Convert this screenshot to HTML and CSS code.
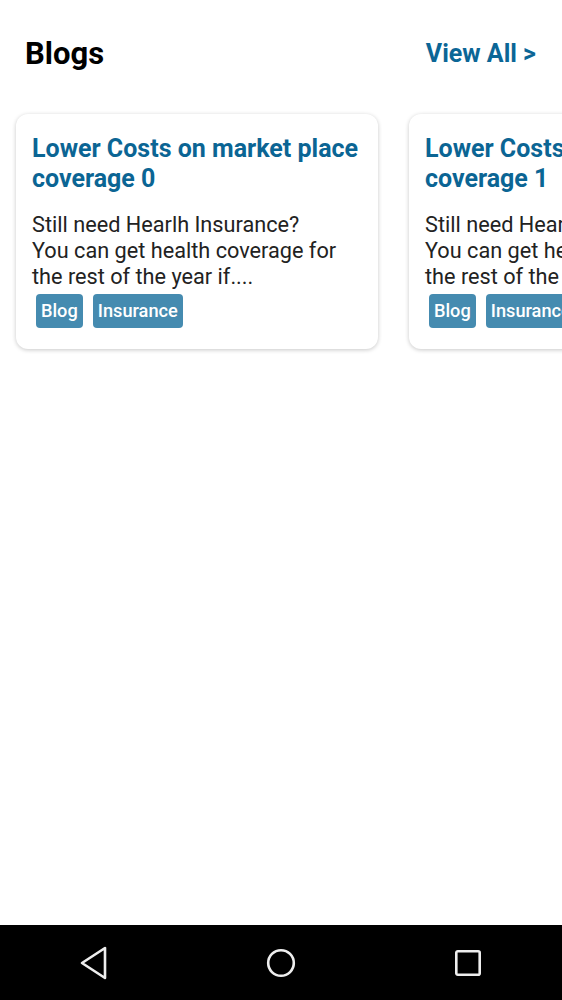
FILE: index.html
```html
<!DOCTYPE html>
<html>
<head>
<meta charset="utf-8">
<link rel="stylesheet" href="styles.css">
</head>
<body>
<div class="screen">
  <main class="content">
    <header class="section-head">
      <h1 class="section-title">Blogs</h1>
      <a class="view-all">View All &gt;</a>
    </header>
    <div class="carousel">
      <article class="card">
        <h2 class="card-title">Lower Costs on market place coverage 0</h2>
        <p class="card-text">Still need Hearlh Insurance?<br>You can get health coverage for the rest of the year if....</p>
        <div class="tags"><span class="tag">Blog</span><span class="tag">Insurance</span></div>
      </article>
      <article class="card">
        <h2 class="card-title">Lower Costs on market place coverage 1</h2>
        <p class="card-text">Still need Hearlh Insurance?<br>You can get health coverage for the rest of the year if....</p>
        <div class="tags"><span class="tag">Blog</span><span class="tag">Insurance</span></div>
      </article>
    </div>
  </main>
  <nav class="navbar">
    <svg class="nav-icon" width="30" height="34" viewBox="0 0 30 34"><path d="M26 2 L26 32 L3 17 Z" fill="none" stroke="#eeeeee" stroke-width="2.6" stroke-linejoin="round"/></svg>
    <svg class="nav-icon" width="32" height="32" viewBox="0 0 32 32"><circle cx="16" cy="16" r="12.8" fill="none" stroke="#eeeeee" stroke-width="2.6"/></svg>
    <svg class="nav-icon" width="30" height="30" viewBox="0 0 30 30"><rect x="3.3" y="3.3" width="23.4" height="23.4" rx="1.5" fill="none" stroke="#eeeeee" stroke-width="2.6"/></svg>
  </nav>
</div>
</body>
</html>
```
FILE: styles.css
```css
html, body {
  margin: 0;
  padding: 0;
  background: #ffffff;
}
body {
  font-family: Roboto, "Liberation Sans", sans-serif;
}
.screen {
  width: 562px;
  height: 1000px;
  display: flex;
  flex-direction: column;
  overflow: hidden;
}
.content {
  flex: 1;
  display: flex;
  flex-direction: column;
}
.section-head {
  display: flex;
  justify-content: space-between;
  align-items: center;
  padding: 37px 26px 0 25px;
  height: 34px;
}
.section-title {
  margin: 0;
  font-size: 31px;
  font-weight: 700;
  color: #000000;
  line-height: 34px;
}
.view-all {
  font-size: 25px;
  font-weight: 700;
  color: #0b6696;
  line-height: 34px;
}
.carousel {
  display: flex;
  gap: 31px;
  padding: 43px 0 12px 16px;
  overflow: hidden;
}
.card {
  flex: none;
  width: 362px;
  box-sizing: border-box;
  padding: 20px 10px 21px 16px;
  border-radius: 12px;
  background: #ffffff;
  box-shadow: 0 1px 4px rgba(0, 0, 0, 0.22);
}
.card-title {
  margin: 0;
  font-size: 25px;
  line-height: 30px;
  font-weight: 700;
  color: #0b6594;
}
.card-text {
  margin: 18px 0 0 0;
  font-size: 21.7px;
  line-height: 26px;
  color: #222222;
}
.tags {
  display: flex;
  gap: 10px;
  margin: 4px 0 0 4px;
}
.tag {
  background: #458bb0;
  color: #ffffff;
  font-size: 18.2px;
  font-weight: 500;
  line-height: 34px;
  padding: 0 5px;
  border-radius: 4px;
  white-space: nowrap;
}
.navbar {
  flex: none;
  height: 75px;
  background: #000000;
  display: flex;
  align-items: center;
  gap: 156px;
  padding: 0 0 0 79px;
}
```
